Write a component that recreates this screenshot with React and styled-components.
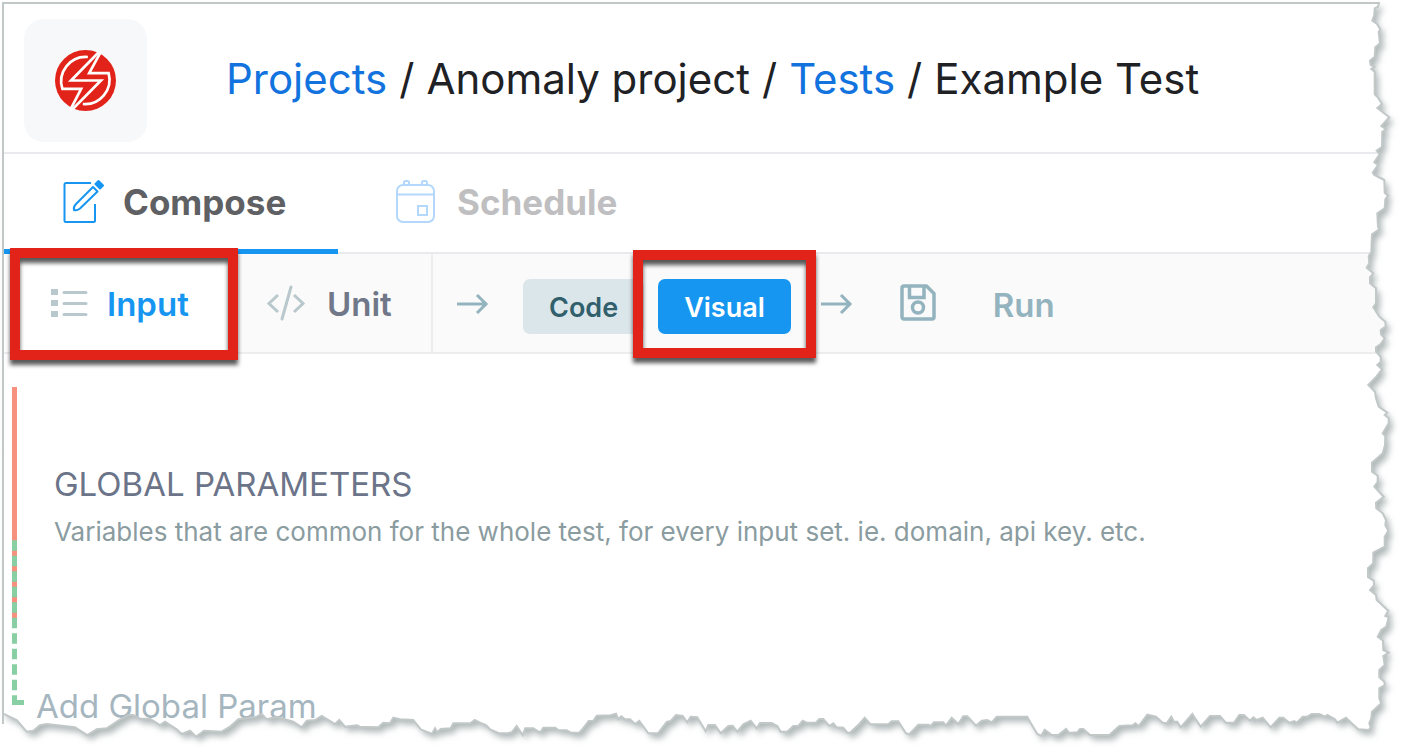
import React from "react";
import styled, { createGlobalStyle } from "styled-components";

const GlobalStyle = createGlobalStyle`
  *, *::before, *::after { box-sizing: border-box; }
  body {
    margin: 0;
    background: #fff;
    color: #202124;
    font-family: Inter, "Liberation Sans", sans-serif;
  }
`;

const Page = styled.div`
  position: relative;
  min-height: 100vh;
  padding: 4px 0 0 4px;
  overflow: hidden;
`;

const Header = styled.header`
  display: flex;
  align-items: center;
  gap: 79px;
  padding: 15px 20px 10px;
  border-bottom: 2px solid #e9eaee;
`;

const LogoTile = styled.a`
  display: flex;
  align-items: center;
  justify-content: center;
  width: 123px;
  height: 123px;
  border-radius: 20px;
  background: #f7f8fa;
`;

const Crumbs = styled.nav`
  display: flex;
  gap: 12px;
  padding-bottom: 4px;
  font-size: 42px;
  line-height: 52px;
  white-space: nowrap;
`;

const CrumbLink = styled.a`
  color: #1273de;
  text-decoration: none;
`;

const Tabs = styled.nav`
  display: flex;
  height: 100px;
  border-bottom: 2px solid #e9eaee;
`;

const Tab = styled.button`
  display: flex;
  align-items: center;
  gap: 19px;
  width: 334px;
  height: 100px;
  padding: 0 0 0 58px;
  border: 0;
  border-bottom: 5px solid ${(p) => (p.$active ? "#1696f1" : "transparent")};
  background: none;
  color: ${(p) => (p.$active ? "#5f6064" : "#bfbfc1")};
  font: inherit;
  font-size: 35px;
  font-weight: 700;
  svg { color: ${(p) => (p.$active ? "#1696f1" : "#b3d8fb")}; }
`;

const Toolbar = styled.div`
  display: flex;
  align-items: center;
  height: 100px;
  border-bottom: 2px solid #ededef;
  background: #fafafa;
`;

const ViewButton = styled.button`
  position: relative;
  display: flex;
  align-items: center;
  gap: ${(p) => (p.$active ? 19 : 21)}px;
  width: ${(p) => (p.$active ? 232 : 197)}px;
  height: 98px;
  padding: 2px 0 0 ${(p) => (p.$active ? 47 : 30)}px;
  border: 0;
  border-right: ${(p) => (p.$active ? "0" : "2px solid #ededef")};
  background: ${(p) => (p.$active ? "#fff" : "transparent")};
  color: ${(p) => (p.$active ? "#1696f1" : "#6f7788")};
  font: inherit;
  font-size: 33px;
  font-weight: 600;
  svg { color: #b9c8cd; }
`;

const Callout = styled.span`
  position: absolute;
  inset: ${(p) => p.$inset};
  border: 10px solid #e2231a;
  filter: drop-shadow(0 5px 2px rgba(0, 0, 0, 0.65));
  pointer-events: none;
`;

const Steps = styled.div`
  display: flex;
  align-items: center;
  padding-left: 24px;
  color: #93b3bf;
`;

const Modes = styled.div`
  display: flex;
  gap: 14px;
  margin: 7px 30px 0 34px;
`;

const ModeButton = styled.button`
  position: relative;
  height: 55px;
  padding: 2px 26px 0;
  border: 0;
  border-radius: 7px;
  background: ${(p) => (p.$active ? "#1696f1" : "#dbe6eb")};
  color: ${(p) => (p.$active ? "#fff" : "#315f6c")};
  font: inherit;
  font-size: 27px;
  font-weight: 600;
`;

const SaveButton = styled.button`
  display: flex;
  margin: 0 57px 0 47px;
  padding: 0;
  border: 0;
  background: none;
  color: inherit;
`;

const RunButton = styled.button`
  padding: 4px 0 0;
  border: 0;
  background: none;
  color: inherit;
  font: inherit;
  font-size: 33px;
  font-weight: 600;
`;

const Main = styled.main`
  display: flex;
  align-items: flex-start;
  padding: 33px 0 0 8px;
`;

const Section = styled.section`
  padding: 77px 0 0 30px;
`;

const Title = styled.h2`
  margin: 0;
  color: #6b7488;
  font-size: 33px;
  font-weight: 400;
  line-height: 40px;
`;

const Description = styled.p`
  margin: 12px 0 0;
  color: #8a9ca0;
  font-size: 26px;
  line-height: 32px;
`;

const AddButton = styled.button`
  display: block;
  margin-top: 138px;
  padding: 0 0 0 12px;
  border: 0;
  background: none;
  color: #a6b6bf;
  font: inherit;
  font-size: 33px;
  line-height: 40px;
`;

const EdgeLayer = styled.svg`
  position: absolute;
  inset: 0;
  width: 100%;
  height: 100%;
  pointer-events: none;
`;

/* Turns flat x,y lists in thirds of a unit into points from an origin. */
const trace = (ox, oy, list) => {
  const n = list.trim().split(/[\s,]+/).map(Number);
  const out = [];
  for (let i = 0; i < n.length; i += 2) {
    out.push(`${(ox + n[i] / 3).toFixed(1)},${(oy + n[i + 1] / 3).toFixed(1)}`);
  }
  return out.join(" ");
};

const upperRight = trace(1342, 0, `111,9 108,20 98,25 97,45 91,62 105,72 115,88 110,96 114,130 100,142
98,170 84,182 86,195 97,200 88,207 98,215 98,283 107,292 120,312 106,324 142,352 118,378 132,388
121,395 120,440 104,452 113,462 97,487 108,495 92,518 97,525 127,540 128,578 138,587 130,598
128,625 106,640 108,680 112,688 90,703 88,757 80,768 82,790 74,803 94,820 84,832 84,850 102,865
102,910 94,922 112,950 130,965 131,980 116,990 117,1003 128,1015 116,1032 102,1042 102,1055
116,1070 116,1085 106,1095 120,1108`);
const lowerRight = trace(1342, 370, `103,20 79,45 99,65 102,85 110,110 136,128 128,135 140,145 140,160
122,190 130,198 129,225 122,250 90,278 90,305 107,317 107,335 97,350 125,380 102,398 103,415
122,430 132,450 130,465 139,482 128,500 128,530 94,548 94,580 78,595 78,622 95,632 96,645 84,660
102,675 104,690 139,722 130,738 140,742 133,770 118,780 107,800 123,812 124,840 140,848 124,858
128,885 112,900 112,922 127,935 128,945 112,955 112,985 118,1000 90,1025 88,1045 82,1060 86,1072
80,1080`);
const bottomRight = trace(900, 690, `1375,118 1355,100 1338,83 1312,98 1305,88 1282,75 1275,80 1258,72
1235,72 1222,80 1208,80 1190,98 1183,93 1168,98 1150,83 1138,83 1112,112 1088,83 1070,90 1060,82
1050,92 1032,75 1018,75 1002,98 977,98 960,78 930,78 902,110 877,72 842,112 832,95 822,95 814,80
800,100 788,98 768,80 742,74 716,108 706,100 698,106 658,108 628,135 570,135 550,117 540,117
532,127 508,129 498,117 475,135 455,135 434,119 424,137 412,132 390,95 382,80 290,80 275,97 262,90
245,92 228,107 202,79 190,79 175,102 155,83 138,107 130,97 102,97 92,108 85,104 55,104 28,133
18,130 0,102`);
const bottomMiddle = trace(400, 690, `1495,94 1475,94 1465,103 1412,103 1394,83 1378,102 1350,128
1342,128 1330,113 1310,112 1300,100 1288,108 1270,87 1258,87 1248,98 1220,98 1208,92 1195,108
1180,108 1162,125 1142,125 1132,108 1115,99 1080,99 1070,115 1052,92 1030,103 1012,125 998,107
985,108 962,130 945,105 925,105 917,124 892,82 872,80 862,97 848,78 828,75 812,93 800,96 774,130
745,130 718,93 705,102 690,88 675,88 664,79 655,88 648,71 632,76 590,77 580,92 566,93 545,120
538,128 512,128 500,121 475,120 466,113 430,113 420,128 400,115 376,115 368,135 350,108 335,127
322,130 295,129 270,118 258,105 240,98 224,90 212,99 160,100 152,115 122,117 112,127 105,115
96,132 62,118 40,90 0,88`);
const bottomLeft = trace(0, 370, `1180,1043 1170,1060 1150,1058 1135,1072 1080,1070 1070,1066 1035,1070
1018,1050 1005,1062 965,1038 945,1050 920,1052 905,1072 880,1055 830,1040 800,1048 785,1032
765,1042 715,1048 690,1070 665,1085 612,1082 588,1100 570,1082 545,1092 530,1078 495,1055
480,1065 450,1046 420,1046 400,1035 385,1035 355,1052 320,1075 290,1078 262,1095 225,1072
140,1062 120,1066 100,1082 80,1085 50,1050 8,1030`);
const torn = [upperRight, lowerRight, bottomRight, bottomMiddle, bottomLeft].join(" ");
const sheet = `M3,3 L${torn} Z`;
const outside = `M0,0 H1402 V748 H0 Z ${sheet}`;

const TornEdge = () => (
  <EdgeLayer viewBox="0 0 1402 748" preserveAspectRatio="none" aria-hidden="true">
    <defs>
      <clipPath id="outside">
        <path d={outside} clipRule="evenodd" />
      </clipPath>
      <filter id="soft" x="-5%" y="-5%" width="110%" height="110%">
        <feGaussianBlur stdDeviation="3" />
      </filter>
    </defs>
    <path d={outside} fillRule="evenodd" fill="#fff" />
    <g clipPath="url(#outside)">
      <path d={sheet} transform="translate(4 5)" fill="#b0b8b8" filter="url(#soft)" />
    </g>
    <path d={`M3,724 V3 L${torn}`} fill="none" stroke="#c1c8c7" strokeWidth="2" />
  </EdgeLayer>
);

const Logo = () => (
  <svg width="61" height="61" viewBox="0 0 182 182" aria-hidden="true">
    <circle cx="91" cy="91" r="91" fill="#e2231a" />
    <g fill="none" stroke="#fff" strokeWidth="8">
      <path d="M134 3 48 91H137L49 180" />
      <path d="M137 5 102 69H160A73 73 0 0 1 83 161" />
      <path d="M46 178 78 116H22A73 73 0 0 1 98 21" />
    </g>
  </svg>
);

const ComposeIcon = () => (
  <svg width="42" height="46" viewBox="0 0 42 46" fill="none" stroke="currentColor" strokeWidth="2" strokeLinejoin="round" aria-hidden="true">
    <path d="M29 4H4a1.500 1.500 0 0 0-1.500 1.500v36A1.500 1.500 0 0 0 4 43h27.500a1.500 1.500 0 0 0 1.500-1.500V25" />
    <path d="m31 8 4.500 4.500L18 29.500c-2 1.500-4.500 2-6 1.500-.500-2 .500-4.500 2-6Z" />
    <path d="m33.500 5 3-3L41 6.500l-3 3Z" fill="currentColor" />
  </svg>
);

const CalendarIcon = () => (
  <svg width="42" height="46" viewBox="0 0 42 46" fill="none" stroke="currentColor" strokeWidth="2" aria-hidden="true">
    <rect x="1" y="6" width="37" height="37" rx="6" />
    <path d="M1 15.500h37M8 6V3.500a1.500 1.500 0 0 1 1.500-1.500h2A1.500 1.500 0 0 1 13 3.500V6M26 6V3.500a1.500 1.500 0 0 1 1.500-1.500h2A1.500 1.500 0 0 1 31 3.500V6" />
    <rect x="22" y="27" width="9" height="9" />
  </svg>
);

const ListIcon = () => (
  <svg width="37" height="32" viewBox="0 0 37 32" fill="currentColor" aria-hidden="true">
    <path d="M0 1h7v6H0zM0 12h7v6H0zM0 23h7v6H0z" />
    <path d="M13 4.500h22M13 15.500h22M13 26.500h22" stroke="currentColor" strokeWidth="3" strokeLinecap="round" />
  </svg>
);

const CodeIcon = () => (
  <svg width="40" height="38" viewBox="0 0 40 38" fill="none" stroke="currentColor" strokeWidth="3" aria-hidden="true">
    <path d="M12 10 3 18.500 12 27M28 10l9 8.500L28 27" />
    <path d="m25 2-9 32" strokeLinecap="round" />
  </svg>
);

const ArrowIcon = () => (
  <svg width="32" height="22" viewBox="0 0 32 22" fill="none" stroke="currentColor" strokeWidth="3" aria-hidden="true">
    <path d="M0 12h30M20 3l9 9-9 9" />
  </svg>
);

const SaveIcon = () => (
  <svg width="36" height="38" viewBox="0 0 36 38" fill="none" stroke="currentColor" strokeWidth="3.500" strokeLinejoin="round" aria-hidden="true">
    <path d="M4 2h22.500L34 9.500V33a2 2 0 0 1-2 2H4a2 2 0 0 1-2-2V4a2 2 0 0 1 2-2Z" />
    <path d="M9.500 2v11.500h14.500V2" strokeLinejoin="miter" />
    <circle cx="18" cy="23.500" r="5.500" />
  </svg>
);

const Rail = () => (
  <svg width="12" height="318" viewBox="0 0 12 318" aria-hidden="true">
    <path d="M2.500 0V231" stroke="#f5917c" strokeWidth="5" />
    <path d="M2.500 153.300V318" stroke="#88cfa3" strokeWidth="5" strokeDasharray="10.400 5.100" />
    <path d="M0 315.500H12" stroke="#88cfa3" strokeWidth="5" />
  </svg>
);

export default function App() {
  return (
    <Page>
      <GlobalStyle />
      <Header>
        <LogoTile href="#home" aria-label="Home">
          <Logo />
        </LogoTile>
        <Crumbs aria-label="Breadcrumb">
          <CrumbLink href="#projects">Projects</CrumbLink>
          <span>/</span>
          <span>Anomaly project</span>
          <span>/</span>
          <CrumbLink href="#tests">Tests</CrumbLink>
          <span>/</span>
          <span>Example Test</span>
        </Crumbs>
      </Header>
      <Tabs>
        <Tab type="button" $active>
          <ComposeIcon />
          Compose
        </Tab>
        <Tab type="button">
          <CalendarIcon />
          Schedule
        </Tab>
      </Tabs>
      <Toolbar>
        <ViewButton type="button" $active>
          <ListIcon />
          Input
          <Callout $inset="-6px -2px -8px 6px" />
        </ViewButton>
        <ViewButton type="button">
          <CodeIcon />
          Unit
        </ViewButton>
        <Steps>
          <ArrowIcon />
          <Modes>
            <ModeButton type="button">Code</ModeButton>
            <ModeButton type="button" $active>
              Visual
              <Callout $inset="-29px -25px -24px -25px" />
            </ModeButton>
          </Modes>
          <ArrowIcon />
          <SaveButton type="button" aria-label="Save">
            <SaveIcon />
          </SaveButton>
          <RunButton type="button">Run</RunButton>
        </Steps>
      </Toolbar>
      <Main>
        <Rail />
        <div>
          <Section>
            <Title>GLOBAL PARAMETERS</Title>
            <Description>
              Variables that are common for the whole test, for every input set. ie. domain, api key. etc.
            </Description>
          </Section>
          <AddButton type="button">Add Global Param</AddButton>
        </div>
      </Main>
      <TornEdge />
    </Page>
  );
}
